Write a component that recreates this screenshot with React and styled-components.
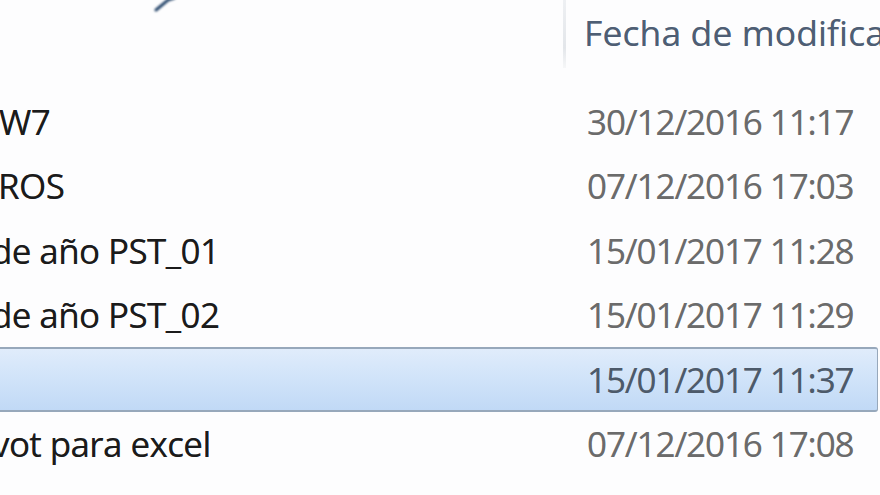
import React from "react";
import styled, { createGlobalStyle } from "styled-components";

const Global = createGlobalStyle`
  html, body { margin: 0; padding: 0; background: #ffffff; }
  body { font-family: "Open Sans", "Noto Sans", sans-serif; }
`;

const Page = styled.div`
  width: 880px;
  height: 495px;
  overflow: hidden;
  background: #fdfdfe;
  position: relative;
`;

const Header = styled.div`
  display: grid;
  grid-template-columns: 563px 3px 1fr;
  height: 89px;
`;

const HeaderCell = styled.div`
  position: relative;
  display: flex;
  align-items: flex-start;
  padding-left: ${(p) => p.$pad || 0}px;
  padding-top: 8px;
  font-size: 35.5px;
  color: #4e5e74;
  white-space: nowrap;
  overflow: hidden;
  letter-spacing: ${(p) => p.$ls || 0}px;
  text-shadow: 0 0 0.6px rgba(78, 94, 116, 0.6);
`;

const Separator = styled.div`
  height: 68px;
  background: linear-gradient(#eef0f3, #e3e6ea 70%, #f6f7f8);
`;

const SortArrow = styled.svg`
  position: absolute;
  left: 152px;
  top: -4px;
  width: 26px;
  height: 16px;
  filter: blur(1px);
`;

const List = styled.div`
  display: flex;
  flex-direction: column;
  width: 878px;
`;

const Row = styled.div`
  display: grid;
  grid-template-columns: 566px 1fr;
  height: 64.5px;
  box-sizing: border-box;
  align-items: center;
  ${(p) =>
    p.$selected &&
    `
    background: linear-gradient(#e0ecfb, #d0e3f9 50%, #c1d9f6);
    border-top: 2px solid #97a8bb;
    border-bottom: 2px solid #97a8bb;
    border-right: 1px solid #97a8bb;
    border-radius: 0 3px 3px 0;
    margin-left: -4px;
    padding-left: 4px;
  `}
`;

const Name = styled.div`
  overflow: hidden;
  white-space: nowrap;
  font-size: 35px;
  color: #1b1b1b;
  letter-spacing: -0.6px;
  text-shadow: 0 0 0.6px rgba(20, 20, 20, 0.6);
`;

const NameText = styled.span`
  display: inline-block;
  margin-left: ${(p) => p.$shift || 0}px;
`;

const DateCell = styled.div`
  padding-left: 21px;
  font-size: 35px;
  white-space: nowrap;
  color: ${(p) => (p.$selected ? "#4d5a6a" : "#6b6b6b")};
  letter-spacing: -1.1px;
  text-shadow: 0 0 0.6px rgba(90, 90, 90, 0.5);
`;

const rows = [
  { name: "W7", shift: -1, date: "30/12/2016 11:17" },
  { name: "ROS", shift: -2, date: "07/12/2016 17:03" },
  { name: "de año PST_01", shift: -9, date: "15/01/2017 11:28" },
  { name: "de año PST_02", shift: -9, date: "15/01/2017 11:29" },
  { name: "", shift: 0, date: "15/01/2017 11:37", selected: true },
  { name: "vot para excel", shift: -8, date: "07/12/2016 17:08" },
];

export default function App() {
  return (
    <>
      <Global />
      <Page>
        <Header>
          <HeaderCell>
            <SortArrow viewBox="0 0 26 16">
              <path d="M4 14 L16 4 L22 2" stroke="#2b4a6e" strokeWidth="3" fill="none" strokeLinecap="round" />
            </SortArrow>
          </HeaderCell>
          <Separator />
          <HeaderCell $pad={18} $ls={0.1}>Fecha de modifica</HeaderCell>
        </Header>
        <List>
          {rows.map((r, i) => (
            <Row key={i} $selected={r.selected}>
              <Name>
                <NameText $shift={r.shift}>{r.name}</NameText>
              </Name>
              <DateCell $selected={r.selected}>{r.date}</DateCell>
            </Row>
          ))}
        </List>
      </Page>
    </>
  );
}
